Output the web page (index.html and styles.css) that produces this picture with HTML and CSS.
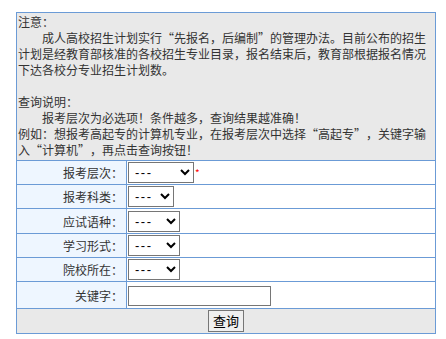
FILE: index.html
```html
<!DOCTYPE html>
<html lang="zh">
<head>
<meta charset="utf-8">
<link rel="stylesheet" href="styles.css">
</head>
<body>
<table class="query">
  <tr>
    <td class="notice" colspan="2">
      <div>注意：</div>
      <div class="indent">成人高校招生计划实行<span class="qo">“</span>先报名，后编制<span class="qc">”</span>的管理办法。目前公布的招生计划是经教育部核准的各校招生专业目录，报名结束后，教育部根据报名情况下达各校分专业招生计划数。</div>
      <div>&nbsp;</div>
      <div>查询说明：</div>
      <div class="indent">报考层次为必选项！条件越多，查询结果越准确！</div>
      <div>例如：想报考高起专的计算机专业，在报考层次中选择<span class="qo">“</span>高起专<span class="qc">”</span>，关键字输入<span class="qo">“</span>计算机<span class="qc">”</span>，再点击查询按钮！</div>
    </td>
  </tr>
  <tr>
    <td class="label">报考层次：</td>
    <td class="field"><select class="sel sel-w1"><option>---</option></select><span class="req">*</span></td>
  </tr>
  <tr>
    <td class="label">报考科类：</td>
    <td class="field"><select class="sel sel-w2"><option>---</option></select></td>
  </tr>
  <tr>
    <td class="label">应试语种：</td>
    <td class="field"><select class="sel sel-w3"><option>---</option></select></td>
  </tr>
  <tr>
    <td class="label">学习形式：</td>
    <td class="field"><select class="sel sel-w3"><option>---</option></select></td>
  </tr>
  <tr>
    <td class="label">院校所在：</td>
    <td class="field"><select class="sel sel-w3"><option>---</option></select></td>
  </tr>
  <tr class="kw-row">
    <td class="label">关键字：</td>
    <td class="field"><input class="kw" type="text"></td>
  </tr>
  <tr>
    <td class="actions" colspan="2"><button class="btn" type="button">查询</button></td>
  </tr>
</table>
</body>
</html>
```
FILE: styles.css
```css
html, body {
  margin: 0;
  padding: 0;
  background: #ffffff;
}
body {
  font-family: "Microsoft YaHei", "Noto Sans CJK SC", "Noto Sans", sans-serif;
  font-size: 12px;
  color: #333333;
}
.query {
  border-collapse: collapse;
  width: 420px;
  margin: 12px 0 0 16px;
}
.query td {
  border: 1px solid #6b9bd6;
}
.notice {
  background: #e9e9e9;
  padding: 1px 1px 2px 1px;
  line-height: 16px;
  vertical-align: top;
}
.indent {
  text-indent: 2em;
}
.qo,
.qc {
  display: inline-block;
  width: 1em;
  text-indent: 0;
}
.qo { text-align: right; }
.qc { text-align: left; }
.label {
  width: 106px;
  background: #eef6ff;
  text-align: right;
  padding: 0 3px 0 0;
  height: 22px;
}
.field {
  background: #ffffff;
  padding: 1px 1px;
  height: 21px;
  vertical-align: middle;
}
.kw-row .label,
.kw-row .field {
  height: 24px;
}
.sel {
  height: 21px;
  font-size: 13px;
  letter-spacing: 1.5px;
  font-family: "Liberation Sans", sans-serif;
  border: 1px solid #767676;
  border-radius: 0;
  background: #ffffff;
  color: #000000;
  vertical-align: middle;
  padding: 0 2px;
}
.sel-w1 { width: 66px; }
.sel-w2 { width: 46px; }
.sel-w3 { width: 52px; }
.req {
  color: #ff0000;
  font-size: 10px;
  vertical-align: middle;
  margin-left: 1px;
}
.kw {
  width: 143px;
  height: 20px;
  box-sizing: border-box;
  border: 1px solid #767676;
  padding: 1px 2px;
  vertical-align: middle;
}
.actions {
  background: #e9e9e9;
  text-align: center;
  padding: 1px 0;
  height: 22px;
}
.btn {
  font-family: "Microsoft YaHei", "Noto Sans CJK SC", sans-serif;
  font-size: 13px;
  color: #000000;
  height: 22px;
  padding: 0 4px;
  border: 1px solid #767676;
  background: #efefef;
  border-radius: 0;
  line-height: 18px;
}
```
